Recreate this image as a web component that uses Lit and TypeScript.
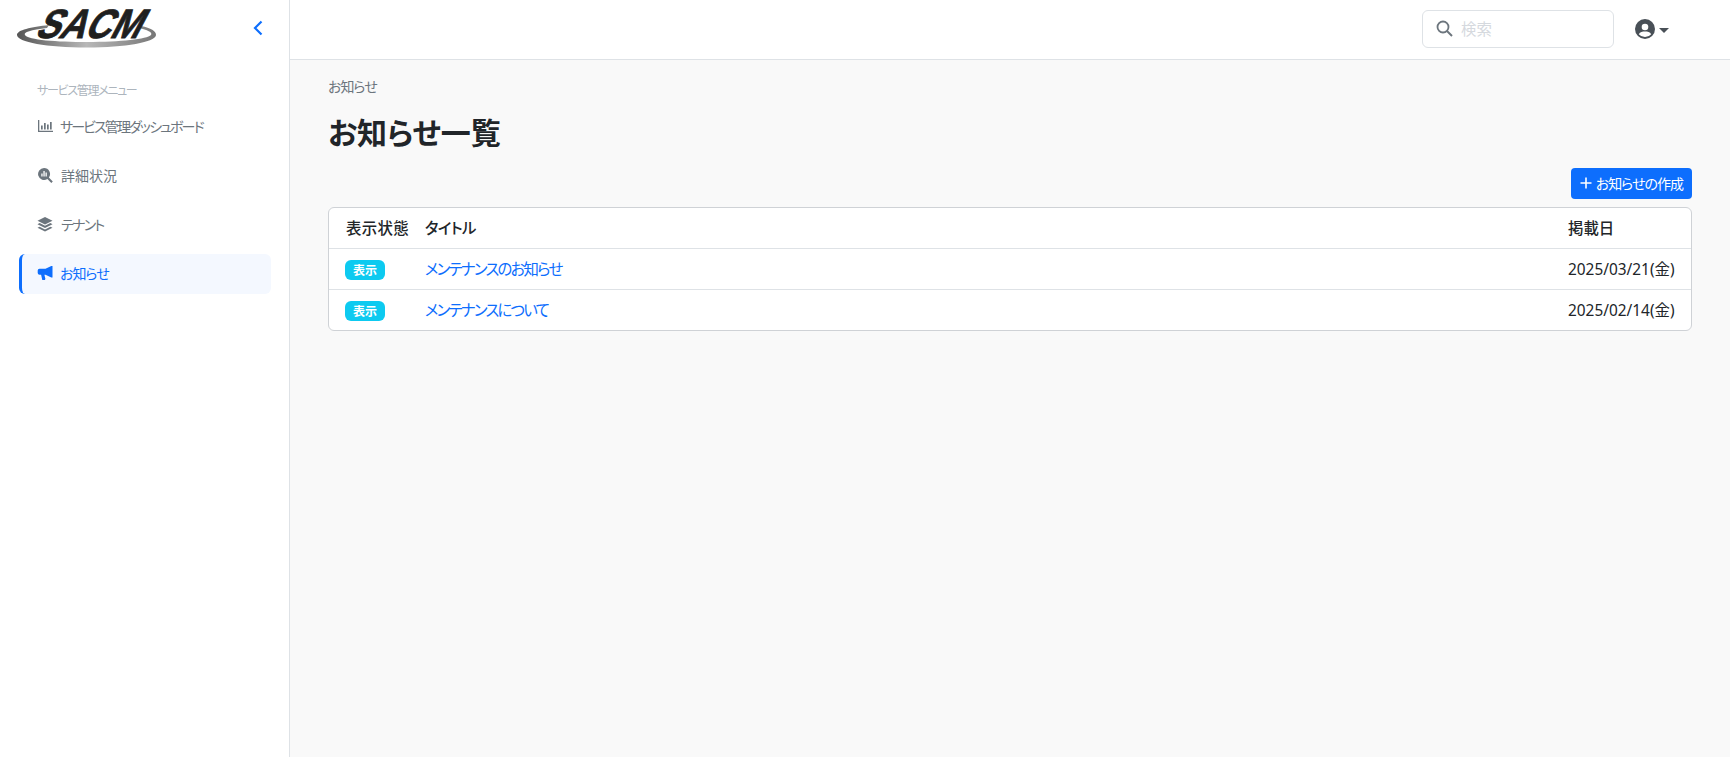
import { LitElement, html, css, svg } from "lit";
import { customElement } from "lit/decorators.js";

const ICONS = {
  chart: svg`<path d="M1 2h1.3v10.7H16V14H1z"/><rect x="4" y="7.5" width="1.7" height="4"/><rect x="7" y="5" width="1.7" height="6.5"/><rect x="10" y="6.5" width="1.7" height="5"/><rect x="13" y="4" width="1.7" height="7.5"/>`,
  search: svg`<path fill-rule="evenodd" d="M7 1a6 6 0 0 1 4.9 9.5l3.9 3.9-1.5 1.5-3.9-3.9A6 6 0 1 1 7 1z"/><g fill="#fff"><rect x="4.3" y="6.5" width="1.3" height="3"/><rect x="6.4" y="4" width="1.3" height="5.500"/><rect x="8.500" y="5.500" width="1.300" height="4"/></g>`,
  layers: svg`<path d="M8 1l7.500 3.700L8 8.400.5 4.700z"/><path d="M2.600 7.100L8 9.800l5.400-2.700 2.100 1.100L8 12 .5 8.200z"/><path d="M2.600 10.700L8 13.400l5.400-2.700 2.100 1.100L8 15.500.5 11.800z"/>`,
  bullhorn: svg`<path d="M15.500 1v11.500h-1.200L8.500 9.700H7.400l1 4.300-.6.900H5.300l-1.200-5.200H2.500A1.800 1.800 0 0 1 .7 8V5.500a1.800 1.800 0 0 1 1.800-1.800h6l5.800-2.700z"/>`,
};

@customElement("app-root")
export class AppRoot extends LitElement {
  static styles = css`
    :host {
      display: flex;
      min-height: 757px;
      font-family: "Noto Sans", "Noto Sans CJK JP", sans-serif;
      font-size: 14px;
      color: #212529;
      background: #f9f9f9;
      font-feature-settings: "palt";
    }
    .sidebar {
      width: 290px;
      box-sizing: border-box;
      flex: none;
      background: #fff;
      border-right: 1px solid #dee2e6;
      padding: 0 18px 0 19px;
    }
    .brand {
      height: 59px;
      display: flex;
      align-items: flex-start;
      justify-content: space-between;
      margin-left: -2px;
      padding-right: 7px;
    }
    .logo { display: block; margin-top: 2px; overflow: visible; }
    .logo text {
      font-family: "Liberation Sans", sans-serif;
      font-size: 41px;
      font-weight: 700;
      fill: #1f1f1f;
      stroke: #1f1f1f;
      stroke-width: 0.9px;
    }
    .collapse { margin-top: 19px; display: block; }
    .menu-title {
      margin: 23px 0 0 18px;
      font-size: 12px;
      line-height: 18px;
      color: #adb5bd;
      letter-spacing: -1.3px;
    }
    .nav { display: flex; flex-direction: column; gap: 9px; margin-top: 7px; }
    .nav-item {
      display: flex;
      align-items: center;
      gap: 7px;
      height: 40px;
      padding-left: 18px;
      padding-bottom: 2px;
      color: #6c757d;
      box-sizing: border-box;
      border-radius: 6px;
    }
    .nav-item svg { width: 16px; height: 16px; fill: #6c757d; flex: none; }
    .nav-item.active {
      background: #f4f8ff;
      color: #0d6efd;
      border-left: 3px solid #0d6efd;
      padding-left: 15px;
    }
    .nav-item.active svg { fill: #0d6efd; }
    .sq-dense { letter-spacing: -1.9px; }
    .sq-none { margin-left: 1px; }
    .sq-mid { letter-spacing: -1.7px; margin-left: 1px; }
    .sq-light { letter-spacing: -1px; }
    .main { flex: 1; min-width: 0; display: flex; flex-direction: column; }
    .topbar {
      height: 60px;
      box-sizing: border-box;
      background: #fff;
      border-bottom: 1px solid #dee2e6;
      display: flex;
      align-items: center;
      justify-content: flex-end;
      padding: 0 61px 1px 0;
      gap: 21px;
    }
    .search {
      width: 192px;
      height: 38px;
      box-sizing: border-box;
      border: 1px solid #dee2e6;
      border-radius: 6px;
      display: flex;
      align-items: center;
      padding: 0 0 2px 13px;
      gap: 8px;
      color: #d5d9de;
      font-size: 15.400px;
    }
    .user { display: flex; align-items: center; gap: 4px; }
    .caret {
      width: 0; height: 0;
      border-left: 5px solid transparent;
      border-right: 5px solid transparent;
      border-top: 5px solid #495057;
      margin-top: 2px;
    }
    .content { padding: 16px 38px 0 38px; }
    .crumb { font-size: 14px; line-height: 21px; color: #6c757d; letter-spacing: -1px; }
    .title {
      margin: 17px 0 0;
      font-size: 30px;
      font-weight: 700;
      line-height: 38px;
      color: #212529;
    }
    .actions { display: flex; justify-content: flex-end; margin-top: 16px; }
    .btn {
      height: 31px;
      box-sizing: border-box;
      background: #0d6efd;
      color: #fff;
      border-radius: 4px;
      display: flex;
      align-items: center;
      gap: 4px;
      padding: 0 9px 2px;
      font-size: 14px;
      letter-spacing: -1px;
    }
    .table-wrap {
      margin-top: 8px;
      background: #fff;
      border: 1px solid #cfd2d6;
      border-radius: 6px;
      overflow: hidden;
      font-size: 15.400px;
    }
    .row {
      display: grid;
      grid-template-columns: 80px 1fr 123px;
      height: 41px;
      align-items: center;
      padding: 0 0 2px 16px;
      border-top: 1px solid #dee2e6;
      box-sizing: border-box;
    }
    .row.head { border-top: 0; height: 40px; font-weight: 500; }
    .row a { color: #0d6efd; text-decoration: none; letter-spacing: -1.750px; }
    .status-head { letter-spacing: 0.400px; margin-left: 1px; }
    .kana { letter-spacing: -0.600px; }
    .status { display: flex; padding-top: 4px; }
    .badge {
      display: flex;
      align-items: center;
      justify-content: center;
      width: 40px;
      height: 20px;
      border-radius: 6px;
      background: #0dcaf0;
      color: #fff;
      font-size: 12px;
      font-weight: 700;
    }
  `;

  private navItem(icon: keyof typeof ICONS, label: string, squeeze: string, active = false) {
    return html`<div class="nav-item ${active ? "active" : ""}">
      <svg viewBox="0 0 16 16">${ICONS[icon]}</svg><span class="${squeeze}">${label}</span>
    </div>`;
  }

  private row(title: string, date: string) {
    return html`<div class="row">
      <div class="status"><span class="badge">表示</span></div>
      <a>${title}</a>
      <div>${date}</div>
    </div>`;
  }

  render() {
    return html`
      <aside class="sidebar">
        <div class="brand">
          <svg class="logo" width="143" height="48" viewBox="0 0 143 48">
            <defs>
              <linearGradient id="ring" x1="0" x2="1" y1="0" y2="0">
                <stop offset="0" stop-color="#555" />
                <stop offset="0.5" stop-color="#b8b8b8" />
                <stop offset="1" stop-color="#777" />
              </linearGradient>
            </defs>
            <path
              fill="url(#ring)"
              fill-rule="evenodd"
              d="M0 33C0 28 14 25 32 23L30 26C14 28 6 30 8 33C11 38 40 40 70 40C104 40 130 37 134 33C136 30 130 28 122 26L124 24C134 26 139 29 139 33C139 40 108 45.500 70 45.500C30 45.500 0 40 0 33Z"
            />
            <text
              transform="translate(17,36) skewX(-28)"
              x="0"
              y="0"
              textLength="104"
              lengthAdjust="spacingAndGlyphs"
            >SACM</text>
          </svg>
          <svg class="collapse" width="12" height="18" viewBox="0 0 12 18">
            <path d="M9.500 2.500L3 9l6.500 6.500" fill="none" stroke="#0d6efd" stroke-width="2.200" />
          </svg>
        </div>
        <div class="menu-title">サービス管理メニュー</div>
        <nav class="nav">
          ${this.navItem("chart", "サービス管理ダッシュボード", "sq-dense")}
          ${this.navItem("search", "詳細状況", "sq-none")}
          ${this.navItem("layers", "テナント", "sq-mid")}
          ${this.navItem("bullhorn", "お知らせ", "sq-light", true)}
        </nav>
      </aside>
      <div class="main">
        <header class="topbar">
          <div class="search">
            <svg width="17" height="17" viewBox="0 0 17 17">
              <circle cx="7" cy="7" r="5.500" fill="none" stroke="#6c757d" stroke-width="1.800" />
              <path d="M11 11l5 5" stroke="#6c757d" stroke-width="2" />
            </svg>
            <span>検索</span>
          </div>
          <div class="user">
            <svg width="20" height="20" viewBox="0 0 20 20">
              <circle cx="10" cy="10" r="10" fill="#495057" />
              <circle cx="10" cy="8" r="3.300" fill="#fff" />
              <path d="M3.800 15.200C5 12.800 7.500 12.400 10 12.400s5 .4 6.200 2.800A8 8 0 0 1 10 18a8 8 0 0 1-6.200-2.800z" fill="#fff" />
            </svg>
            <span class="caret"></span>
          </div>
        </header>
        <section class="content">
          <div class="crumb">お知らせ</div>
          <h1 class="title">お知らせ一覧</h1>
          <div class="actions">
            <div class="btn">
              <svg width="12" height="12" viewBox="0 0 12 12"><path d="M6 .5v11M.5 6h11" stroke="#fff" stroke-width="1.600" /></svg>
              <span>お知らせの作成</span>
            </div>
          </div>
          <div class="table-wrap">
            <div class="row head"><div class="status-head">表示状態</div><div class="kana">タイトル</div><div>掲載日</div></div>
            ${this.row("メンテナンスのお知らせ", "2025/03/21(金)")}
            ${this.row("メンテナンスについて", "2025/02/14(金)")}
          </div>
        </section>
      </div>
    `;
  }
}
